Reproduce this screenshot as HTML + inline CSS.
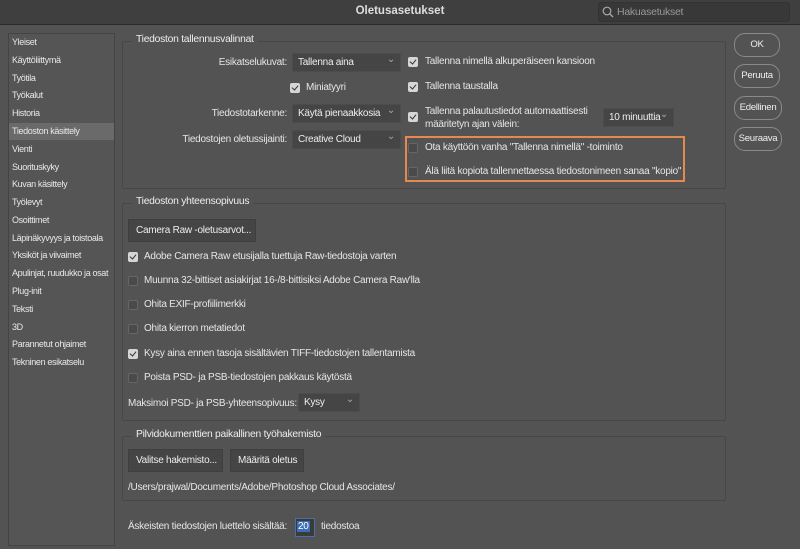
<!DOCTYPE html>
<html><head><meta charset="utf-8"><style>
*{box-sizing:border-box;margin:0;padding:0}
body{width:800px;height:549px;background:#535353;font-family:"Liberation Sans",sans-serif;font-size:10px;letter-spacing:-0.25px;color:#e6e6e6;position:relative;overflow:hidden}
div{white-space:nowrap}
.a{position:absolute}
.title{left:0;top:0;width:800px;height:25px;background:#3f3f3f;border-bottom:1px solid #2c2c2c}
.side{left:8px;top:33px;width:107px;height:513px;border:1px solid #444;background:#555}
.si{position:absolute;left:3px;font-size:9px;color:#e8e8e8;letter-spacing:-0.35px}
.grp{position:absolute;border:1px solid #474747;border-radius:2px}
.gt{position:absolute;background:#535353;padding:0 4px;font-size:10.3px;color:#eee}
.dd{position:absolute;background:#454545;border:1px solid #4c4c4c;height:19px;line-height:17px;padding-left:5px;color:#eee;overflow:hidden}
.dd:after{content:"⌄";position:absolute;right:5px;top:-3px;font-size:10px;color:#aaa}
.cb{position:absolute;width:10px;height:10px;border-radius:2px;background:#d6d6d6}
.cb:after{content:"";position:absolute;left:3px;top:1px;width:3px;height:5px;border:solid #333;border-width:0 1.6px 1.6px 0;transform:rotate(40deg)}
.un{position:absolute;width:10px;height:10px;border-radius:2px;background:#4a4a4a;border:1px solid #666}
.btn{position:absolute;background:#454545;border:1px solid #3f3f3f;height:23px;line-height:21px;padding:0 7px;color:#eee}
.rb{position:absolute;border:1.3px solid #8a8a8a;border-radius:11px;height:24px;line-height:21px;text-align:center;color:#eee;font-size:9.6px;letter-spacing:-0.3px}
</style></head><body>
<div class="a title"></div>
<div class="a" style="left:0;width:800px;top:5px;text-align:center;font-weight:bold;font-size:11.5px;color:#ddd;letter-spacing:0">Oletusasetukset</div>
<div class="a" style="left:598px;top:2px;width:192px;height:20px;background:#383838;border:1px solid #333;border-radius:3px"></div>
<svg class="a" style="left:602px;top:6px" width="12" height="12"><circle cx="5" cy="5" r="3.8" fill="none" stroke="#aaa" stroke-width="1.2"/><line x1="8" y1="8" x2="11" y2="11" stroke="#aaa" stroke-width="1.3"/></svg>
<div class="a" style="left:617px;top:6px;color:#999;font-size:10.5px">Hakuasetukset</div>

<div class="a side">
<div class="a" style="left:0;top:89px;width:105px;height:17px;background:#6a6a6a"></div>
<div class="si" style="top:3px">Yleiset</div>
<div class="si" style="top:21px">Käyttöliittymä</div>
<div class="si" style="top:39px">Työtila</div>
<div class="si" style="top:56px">Työkalut</div>
<div class="si" style="top:74px">Historia</div>
<div class="si" style="top:92px">Tiedoston käsittely</div>
<div class="si" style="top:110px">Vienti</div>
<div class="si" style="top:128px">Suorituskyky</div>
<div class="si" style="top:145px">Kuvan käsittely</div>
<div class="si" style="top:163px">Työlevyt</div>
<div class="si" style="top:181px">Osoittimet</div>
<div class="si" style="top:199px">Läpinäkyvyys ja toistoala</div>
<div class="si" style="top:216px">Yksiköt ja viivaimet</div>
<div class="si" style="top:234px">Apulinjat, ruudukko ja osat</div>
<div class="si" style="top:252px">Plug-init</div>
<div class="si" style="top:270px">Teksti</div>
<div class="si" style="top:288px">3D</div>
<div class="si" style="top:305px">Parannetut ohjaimet</div>
<div class="si" style="top:323px">Tekninen esikatselu</div>
</div>

<div class="grp" style="left:122px;top:41px;width:604px;height:148px"></div>
<div class="gt" style="left:132px;top:34px">Tiedoston tallennusvalinnat</div>
<div class="a" style="right:513px;top:57px">Esikatselukuvat:</div>
<div class="dd" style="left:292px;top:53px;width:109px">Tallenna aina</div>
<div class="cb" style="left:290px;top:83px"></div><div class="a" style="left:306px;top:82px">Miniatyyri</div>
<div class="a" style="right:513px;top:108px">Tiedostotarkenne:</div>
<div class="dd" style="left:292px;top:104px;width:109px">Käytä pienaakkosia</div>
<div class="a" style="right:513px;top:134px">Tiedostojen oletussijainti:</div>
<div class="dd" style="left:292px;top:130px;width:109px">Creative Cloud</div>

<div class="cb" style="left:408px;top:57px"></div><div class="a" style="left:425px;top:56px">Tallenna nimellä alkuperäiseen kansioon</div>
<div class="cb" style="left:408px;top:82px"></div><div class="a" style="left:425px;top:81px">Tallenna taustalla</div>
<div class="cb" style="left:408px;top:112px"></div><div class="a" style="left:425px;top:105px;line-height:13px">Tallenna palautustiedot automaattisesti<br>määritetyn ajan välein:</div>
<div class="dd" style="left:603px;top:108px;width:71px">10 minuuttia</div>
<div class="a" style="left:405px;top:136px;width:280px;height:46px;border:2px solid #e58a4f"></div>
<div class="un" style="left:408px;top:143px"></div><div class="a" style="left:425px;top:142px">Ota käyttöön vanha "Tallenna nimellä" -toiminto</div>
<div class="un" style="left:408px;top:167px"></div><div class="a" style="left:425px;top:166px">Älä liitä kopiota tallennettaessa tiedostonimeen sanaa "kopio"</div>

<div class="rb" style="left:734px;top:33px;width:46px">OK</div>
<div class="rb" style="left:734px;top:64px;width:46px">Peruuta</div>
<div class="rb" style="left:734px;top:96px;width:48px">Edellinen</div>
<div class="rb" style="left:734px;top:127px;width:48px">Seuraava</div>

<div class="grp" style="left:122px;top:203px;width:604px;height:218px"></div>
<div class="gt" style="left:132px;top:196px">Tiedoston yhteensopivuus</div>
<div class="btn" style="left:128px;top:219px;width:128px">Camera Raw -oletusarvot...</div>
<div class="cb" style="left:128px;top:252px"></div><div class="a" style="left:144px;top:251px">Adobe Camera Raw etusijalla tuettuja Raw-tiedostoja varten</div>
<div class="un" style="left:128px;top:276px"></div><div class="a" style="left:144px;top:275px">Muunna 32-bittiset asiakirjat 16-/8-bittisiksi Adobe Camera Raw'lla</div>
<div class="un" style="left:128px;top:300px"></div><div class="a" style="left:144px;top:299px">Ohita EXIF-profiilimerkki</div>
<div class="un" style="left:128px;top:324px"></div><div class="a" style="left:144px;top:323px">Ohita kierron metatiedot</div>
<div class="cb" style="left:128px;top:349px"></div><div class="a" style="left:144px;top:348px">Kysy aina ennen tasoja sisältävien TIFF-tiedostojen tallentamista</div>
<div class="un" style="left:128px;top:373px"></div><div class="a" style="left:144px;top:372px">Poista PSD- ja PSB-tiedostojen pakkaus käytöstä</div>
<div class="a" style="left:128px;top:398px">Maksimoi PSD- ja PSB-yhteensopivuus:</div>
<div class="dd" style="left:298px;top:393px;width:62px">Kysy</div>

<div class="grp" style="left:122px;top:436px;width:604px;height:65px"></div>
<div class="gt" style="left:132px;top:429px">Pilvidokumenttien paikallinen työhakemisto</div>
<div class="btn" style="left:128px;top:449px;width:95px">Valitse hakemisto...</div>
<div class="btn" style="left:230px;top:449px;width:74px">Määritä oletus</div>
<div class="a" style="left:128px;top:482px">/Users/prajwal/Documents/Adobe/Photoshop Cloud Associates/</div>

<div class="a" style="left:128px;top:521px">Äskeisten tiedostojen luettelo sisältää:</div>
<div class="a" style="left:295px;top:518px;width:20px;height:19px;background:#3a3a3a;border:1px solid #4a6fa5"></div>
<div class="a" style="left:297px;top:521px;background:#3d6db5;color:#fff;padding:0 1px">20</div>
<div class="a" style="left:321px;top:521px">tiedostoa</div>
</body></html>
